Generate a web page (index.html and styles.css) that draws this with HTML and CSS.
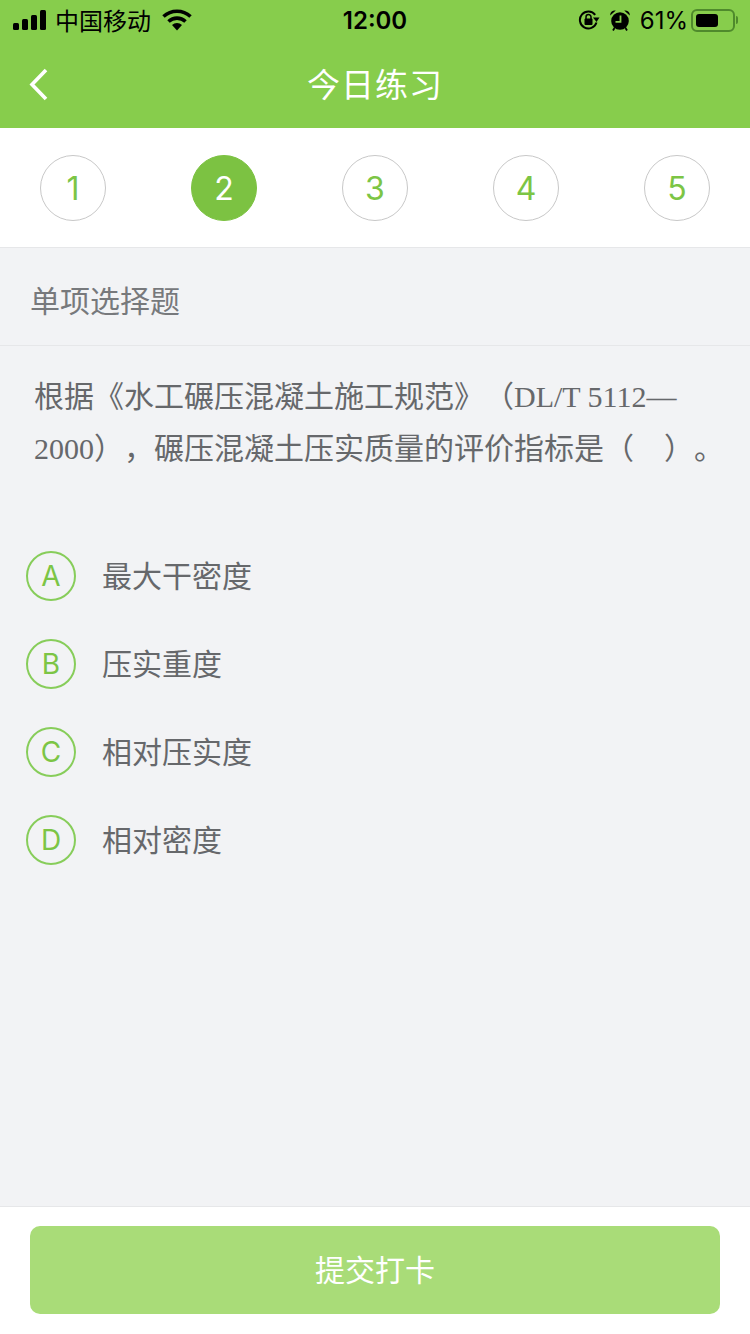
FILE: index.html
```html
<!DOCTYPE html>
<html lang="zh-CN">
<head>
    <meta charset="UTF-8">
    <meta name="viewport" content="width=device-width, initial-scale=1.0">
    <title>今日练习</title>
    <link rel="stylesheet" href="styles.css">
</head>
<body>
    <div class="page">
        <div class="status-bar">
            <div class="status-left">
                <svg class="icon-signal" width="34" height="22" viewBox="0 0 34 22">
                    <rect x="0" y="14" width="6" height="7" rx="1.5"/>
                    <rect x="9" y="10" width="6" height="11" rx="1.5"/>
                    <rect x="18" y="6" width="6" height="15" rx="1.5"/>
                    <rect x="27" y="1" width="6" height="20" rx="1.5"/>
                </svg>
                <span class="carrier">中国移动</span>
                <svg class="icon-wifi" width="30" height="22" viewBox="0 0 30 22">
                    <path d="M1.5 7.5 A20 20 0 0 1 28.5 7.5" fill="none" stroke="#000" stroke-width="3.6"/>
                    <path d="M6.5 12.5 A12.5 12.5 0 0 1 23.5 12.5" fill="none" stroke="#000" stroke-width="3.6"/>
                    <path d="M10 16 L15 21.5 L20 16 A7.5 7.5 0 0 0 10 16 Z"/>
                </svg>
            </div>
            <div class="clock">12:00</div>
            <div class="status-right">
                <svg class="icon-lock" width="22" height="20" viewBox="0 0 22 20">
                    <path d="M18.5 12.5 A8.5 8.5 0 1 1 17.2 4.8" fill="none" stroke="#000" stroke-width="2"/>
                    <path d="M15 7.5 L21.5 7.5 L18.5 12 Z"/>
                    <rect x="6.5" y="8.5" width="8" height="6.5" rx="1"/>
                    <path d="M8 9 V7 A2.5 2.5 0 0 1 13 7 V9" fill="none" stroke="#000" stroke-width="1.5"/>
                </svg>
                <svg class="icon-alarm" width="20" height="21" viewBox="0 0 20 21">
                    <circle cx="10" cy="11" r="8.8"/>
                    <path d="M0.2 5.5 A4.6 4.6 0 0 1 5.8 0.6 Z M19.8 5.5 A4.6 4.6 0 0 0 14.2 0.6 Z"/>
                    <path d="M4.5 18 L3 20.5 M15.5 18 L17 20.5" stroke="#000" stroke-width="1.8"/>
                    <path d="M10.5 5.5 V11.8 H5.5" fill="none" stroke="#87cd4c" stroke-width="1.8"/>
                </svg>
                <span class="battery-text">61%</span>
                <div class="battery">
                    <div class="battery-level"></div>
                </div>
                <div class="battery-nub"></div>
            </div>
        </div>

        <div class="nav-bar">
            <div class="nav-back">
                <svg width="20" height="33" viewBox="0 0 20 33">
                    <path d="M18 2 L4 16.5 L18 31" fill="none" stroke="#fff" stroke-width="3.6"/>
                </svg>
            </div>
            <div class="nav-title">今日练习</div>
            <div></div>
        </div>

        <div class="steps">
            <div class="step">1</div>
            <div class="step step-active">2</div>
            <div class="step">3</div>
            <div class="step">4</div>
            <div class="step">5</div>
        </div>

        <div class="main">
            <div class="question-type">单项选择题</div>
            <div class="question-text">根据《水工碾压混凝土施工规范》（<span class="latin">DL/T 5112—</span><br><span class="latin">2000</span>），碾压混凝土压实质量的评价指标是（　）。</div>
            <div class="options">
                <div class="option">
                    <div class="option-mark">A</div>
                    <div class="option-text">最大干密度</div>
                </div>
                <div class="option">
                    <div class="option-mark">B</div>
                    <div class="option-text">压实重度</div>
                </div>
                <div class="option">
                    <div class="option-mark">C</div>
                    <div class="option-text">相对压实度</div>
                </div>
                <div class="option">
                    <div class="option-mark">D</div>
                    <div class="option-text">相对密度</div>
                </div>
            </div>
        </div>

        <div class="footer">
            <button class="submit-btn">提交打卡</button>
        </div>
    </div>
</body>
</html>
```

FILE: styles.css
```css
* {
    margin: 0;
    padding: 0;
    box-sizing: border-box;
    font-family: "Noto Sans CJK SC", "Noto Sans", sans-serif;
}
body {
    background-color: #f2f3f5;
}
.page {
    display: flex;
    flex-direction: column;
    height: 1334px;
}
.status-bar {
    display: grid;
    grid-template-columns: 1fr auto 1fr;
    align-items: center;
    height: 40px;
    background: #87cd4c;
    color: #000;
}
.status-left {
    display: flex;
    align-items: center;
    padding-left: 13px;
}
.carrier {
    font-size: 24px;
    line-height: 40px;
    margin-left: 8px;
}
.icon-wifi {
    margin-left: 11px;
}
.clock {
    font-family: Inter, sans-serif;
    font-size: 24px;
    font-weight: 600;
}
.status-right {
    display: flex;
    align-items: center;
    justify-content: flex-end;
    padding-right: 12px;
}
.icon-alarm {
    margin-left: 10px;
}
.battery-text {
    font-family: Inter, sans-serif;
    font-size: 24px;
    margin-left: 10px;
}
.battery {
    width: 44px;
    height: 23px;
    margin-left: 3px;
    padding: 3px;
    border: 2px solid #4f8a2c;
    border-radius: 6px;
}
.battery-level {
    width: 22px;
    height: 100%;
    background: #000;
    border-radius: 3px;
}
.battery-nub {
    width: 2px;
    height: 8px;
    margin-left: 1px;
    background: #4f8a2c;
    border-radius: 0 2px 2px 0;
}
.nav-bar {
    display: grid;
    grid-template-columns: 1fr auto 1fr;
    align-items: center;
    height: 88px;
    background: #87cd4c;
}
.nav-back {
    display: flex;
    padding-left: 28px;
}
.nav-title {
    padding-bottom: 3px;
    font-size: 33px;
    letter-spacing: 1px;
    color: #fff;
}
.steps {
    display: flex;
    justify-content: space-between;
    padding: 27px 40px 26px;
    background: #fff;
    border-bottom: 1px solid #e6e7e9;
}
.step {
    display: flex;
    align-items: center;
    justify-content: center;
    width: 66px;
    height: 66px;
    font-family: Inter, sans-serif;
    font-size: 32px;
    font-weight: 400;
    color: #7cc545;
    border: 1px solid #c8c8c8;
    border-radius: 50%;
}
.step-active {
    background: #7cc242;
    border-color: #7cc242;
    color: #fff;
}
.main {
    flex: 1;
}
.question-type {
    height: 98px;
    padding-left: 30px;
    font-size: 30px;
    line-height: 102px;
    color: #77797c;
    border-bottom: 1px solid #e6e7e9;
}
.question-text {
    padding: 22px 12px 0 34px;
    font-size: 30px;
    line-height: 52px;
    color: #66686b;
    text-spacing-trim: space-all;
}
.latin {
    font-family: "Liberation Serif", serif;
    line-height: 1;
}
.options {
    margin-top: 60px;
}
.option {
    display: flex;
    align-items: center;
    height: 88px;
    padding-left: 26px;
}
.option-mark {
    display: flex;
    align-items: center;
    justify-content: center;
    width: 50px;
    height: 50px;
    font-family: Inter, sans-serif;
    font-size: 28px;
    font-weight: 400;
    color: #7cc545;
    border: 2px solid #87cd5a;
    border-radius: 50%;
}
.option-text {
    margin-left: 26px;
    padding-bottom: 5px;
    font-size: 30px;
    color: #66686b;
}
.footer {
    height: 128px;
    padding: 19px 30px 0;
    background: #fff;
    border-top: 1px solid #e6e7e9;
}
.submit-btn {
    width: 100%;
    height: 88px;
    padding-bottom: 4px;
    font-size: 30px;
    color: #fff;
    background: #a9dc78;
    border: none;
    border-radius: 10px;
}
```
